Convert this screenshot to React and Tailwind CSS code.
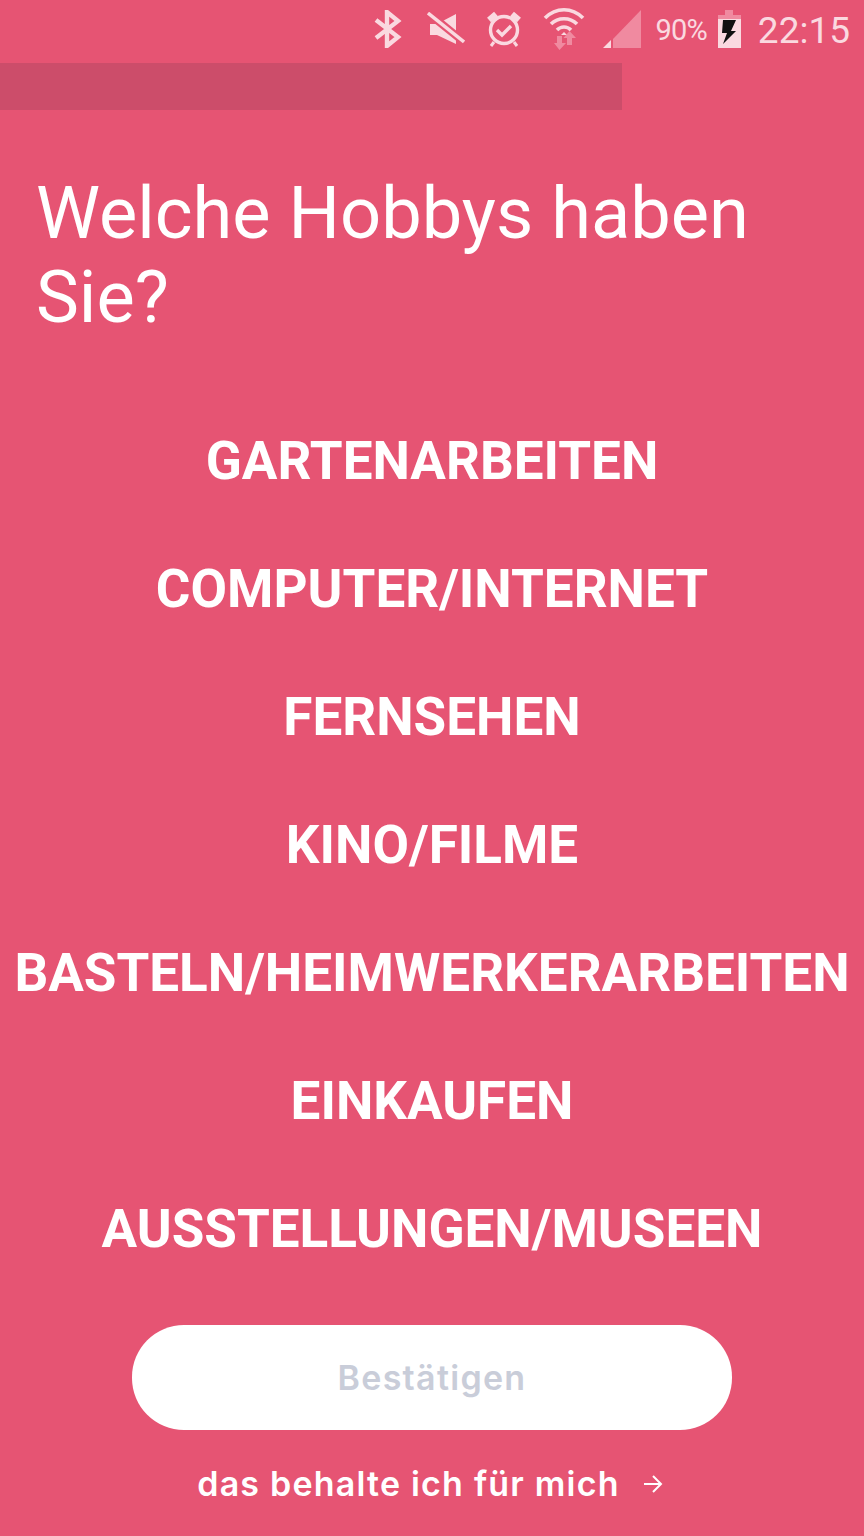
const options = ["GARTENARBEITEN","COMPUTER/INTERNET","FERNSEHEN","KINO/FILME","BASTELN/HEIMWERKERARBEITEN","EINKAUFEN","AUSSTELLUNGEN/MUSEEN"];

function StatusBar() {
  return (
    <div className="h-[63px] flex items-center justify-end pr-[14px] pb-[6px] text-[#fad9e0] font-['Roboto',sans-serif]">
      <svg width="28" height="38" viewBox="0 0 28 38" fill="none" stroke="#fad9e0" strokeWidth="4.4">
        <path d="M2 10 L24 27 L13 36 L13 2 L24 11 L2 28" />
      </svg>
      <svg width="38" height="34" viewBox="0 0 38 34" className="ml-[25px]">
        <path d="M3 12 H10 L29 2 V32 L10 23 H3 Z" fill="#fad9e0" />
        <path d="M0 0 L37 30" stroke="#e65473" strokeWidth="8" />
        <path d="M1 1 L37 30" stroke="#fad9e0" strokeWidth="3.4" />
      </svg>
      <svg width="36" height="38" viewBox="0 0 36 38" className="ml-[21px]" fill="none" stroke="#fad9e0">
        <circle cx="18" cy="20" r="13.500" strokeWidth="3.400" />
        <path d="M11 20 L16 25 L25 16" strokeWidth="3.400" />
        <path d="M3 10 L10 4 M33 10 L26 4" strokeWidth="6" />
        <path d="M8 32 L5 36 M28 32 L31 36" strokeWidth="3" />
      </svg>
      <svg width="42" height="44" viewBox="0 0 42 44" className="ml-[21px]" fill="none">
        <path d="M2 11 C13 0 29 0 40 11" stroke="#fad9e0" strokeWidth="3.600" />
        <path d="M8 17 C15 10 27 10 34 17" stroke="#fad9e0" strokeWidth="3.600" />
        <path d="M14 23 C18 19 24 19 28 23" stroke="#fad9e0" strokeWidth="3.600" />
        <path d="M18 28 L21 25 L24 28 Z" fill="#fad9e0" />
        <path d="M14 29 H19 V36 H23 L16.500 43 L11 36 H14 Z" fill="#f08aa0" />
        <path d="M24 38 V31 H20.500 L26.500 24 L33 31 H29 V38 Z" fill="#f08aa0" />
      </svg>
      <svg width="38" height="38" viewBox="0 0 38 38" className="ml-[18px]">
        <path d="M10 38 V29 L38 0 V38 Z" fill="#f08aa0" />
        <path d="M0 38 L8 30 V38 Z" fill="#fad9e0" />
      </svg>
      <span className="ml-[14px] mt-[3px] text-[29px] leading-none tracking-[-0.8px]">90%</span>
      <svg width="25" height="38" viewBox="0 0 25 38" className="ml-[10px]">
        <path d="M8 0 H16 V5 H24 V9 H1 V5 H8 Z" fill="#f08aa0" />
        <path d="M1 9 H24 V38 H1 Z" fill="#fad9e0" />
        <path d="M6 10 H19 L14 21 H19 L6 34 L10 23 H5 Z" fill="#111" />
      </svg>
      <span className="ml-[16px] mt-[3px] text-[37px] leading-none">22:15</span>
    </div>
  );
}

export default function App() {
  return (
    <div className="h-[1536px] w-[864px] bg-[#e65473] overflow-hidden flex flex-col font-['Roboto',sans-serif] text-white">
      <StatusBar />
      <div className="h-[47px] w-[622px] bg-[#cc4d6a]" />
      <h1 className="mt-[62px] pl-[36px] text-[72.2px] leading-[84px] font-normal">Welche Hobbys haben Sie?</h1>
      <ul className="mt-[58px] flex flex-col items-center">
        {options.map((o) => (
          <li key={o} className="h-[128px] flex items-center justify-center text-[53px] font-bold whitespace-nowrap">{o}</li>
        ))}
      </ul>
      <div className="mt-[31px] flex flex-col items-center">
        <button className="w-[600px] h-[105px] rounded-[52px] bg-white text-[#c9cdd9] text-[34px] tracking-[1.3px] font-semibold font-['Inter',sans-serif]">Bestätigen</button>
        <div className="mt-[32px] pr-[4px] flex items-center text-[34px] tracking-[1.2px] font-semibold font-['Inter',sans-serif] leading-[44px]">
          <span>das behalte ich für mich</span>
          <svg width="20" height="20" viewBox="0 0 20 20" className="ml-[23px]" fill="none" stroke="white" strokeWidth="2">
            <path d="M1 10 H18 M10 2 L18 10 L10 18" />
          </svg>
        </div>
      </div>
    </div>
  );
}
